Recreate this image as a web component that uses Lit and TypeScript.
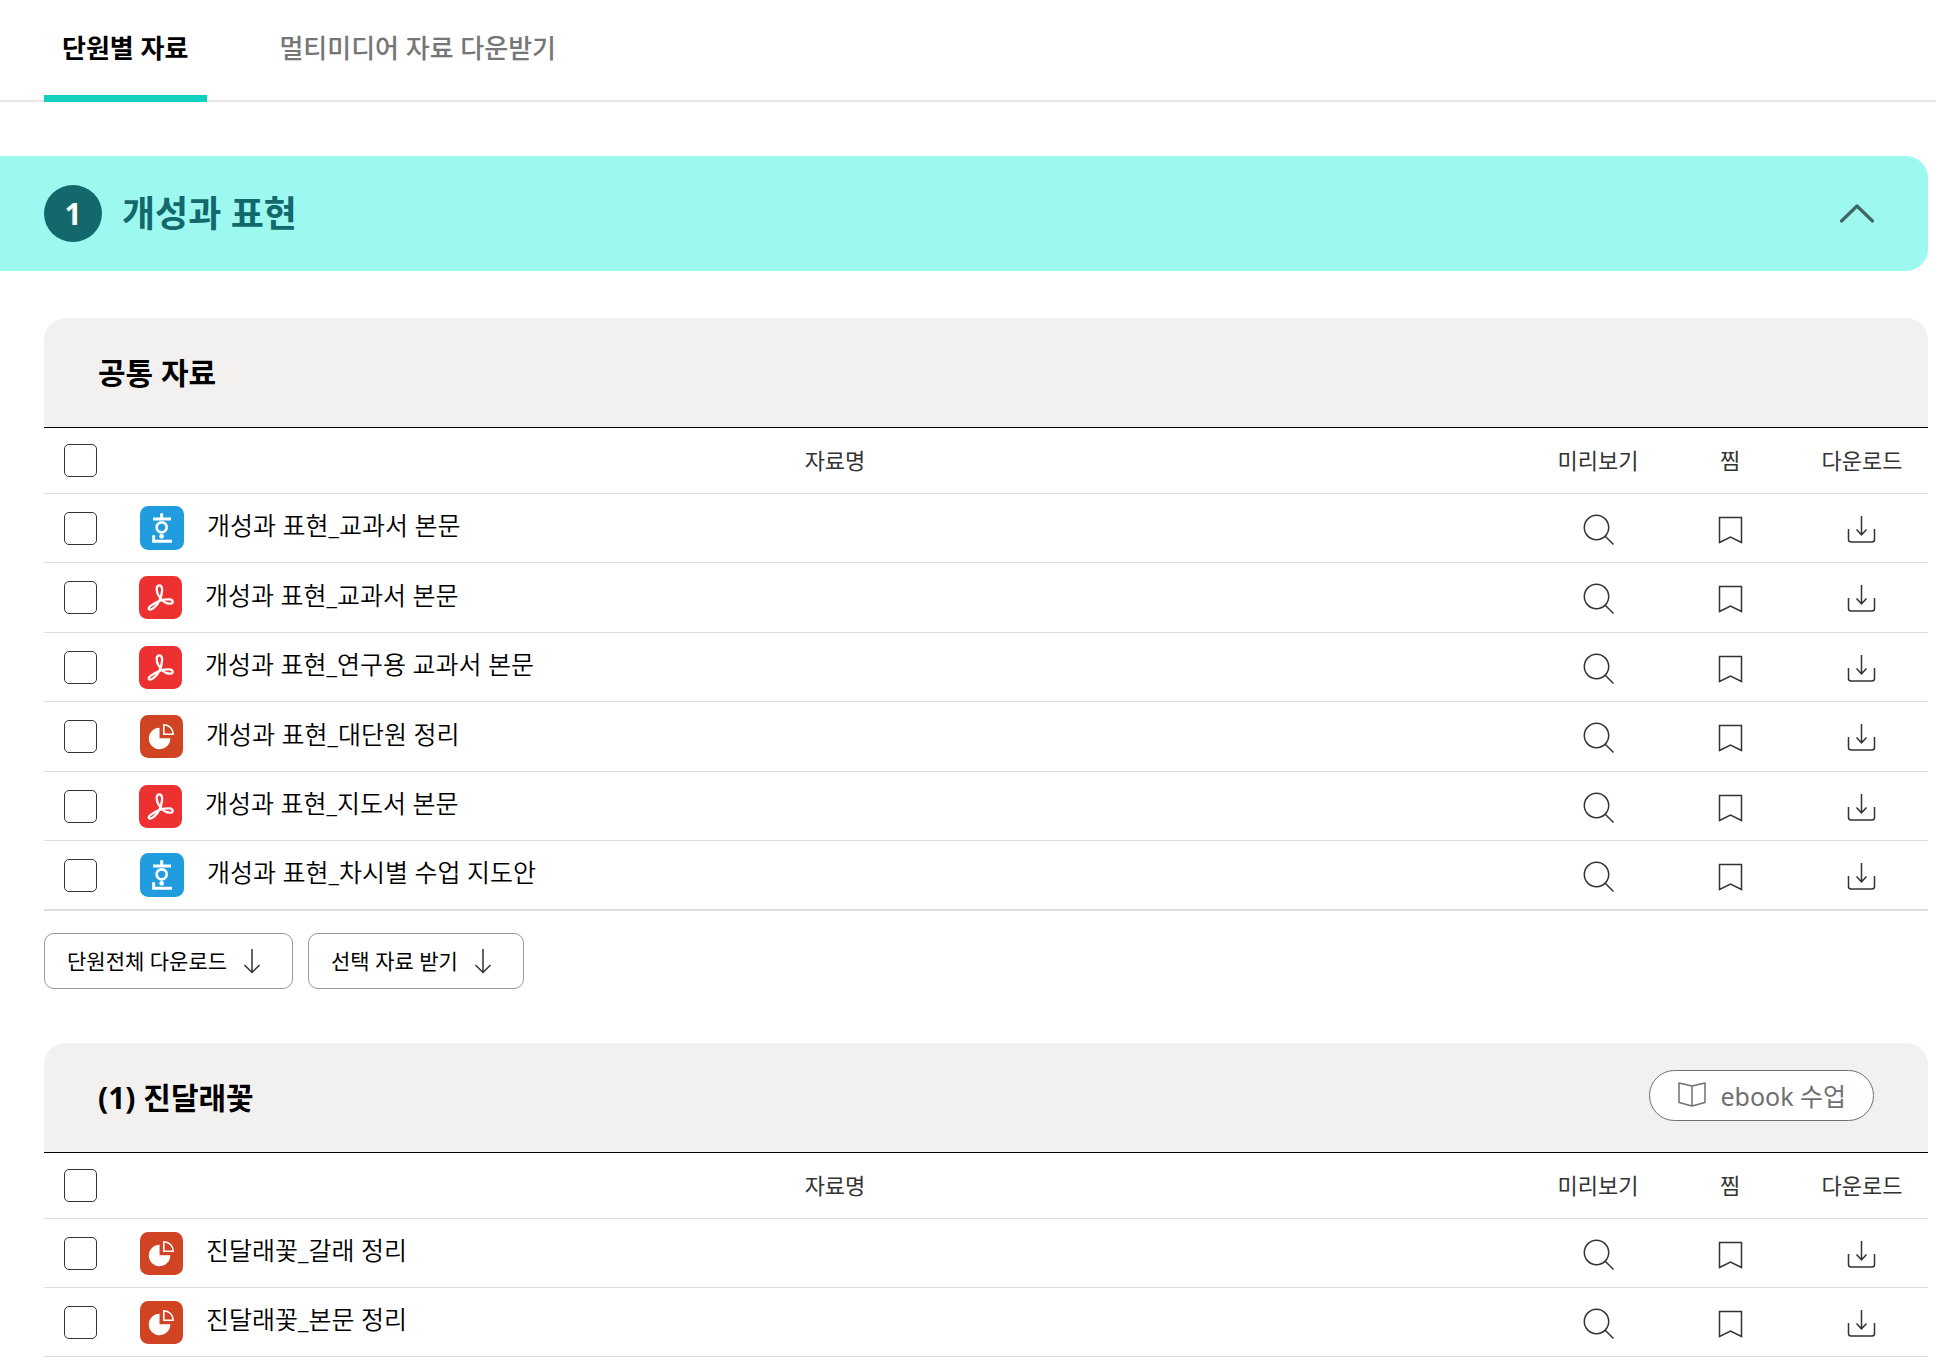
import { LitElement, html, css, svg, nothing } from "lit";
import { customElement, property } from "lit/decorators.js";

type FileKind = "hwp" | "pdf" | "ppt";

interface Material {
  kind: FileKind;
  name: string;
}

interface Section {
  id: string;
  title: string;
  ebook: boolean;
  downloads: boolean;
  items: Material[];
}

const SECTIONS: Section[] = [
  {
    id: "common",
    title: "공통 자료",
    ebook: false,
    downloads: true,
    items: [
      { kind: "hwp", name: "개성과 표현_교과서 본문" },
      { kind: "pdf", name: "개성과 표현_교과서 본문" },
      { kind: "pdf", name: "개성과 표현_연구용 교과서 본문" },
      { kind: "ppt", name: "개성과 표현_대단원 정리" },
      { kind: "pdf", name: "개성과 표현_지도서 본문" },
      { kind: "hwp", name: "개성과 표현_차시별 수업 지도안" },
    ],
  },
  {
    id: "azalea",
    title: "(1) 진달래꽃",
    ebook: true,
    downloads: false,
    items: [
      { kind: "ppt", name: "진달래꽃_갈래 정리" },
      { kind: "ppt", name: "진달래꽃_본문 정리" },
    ],
  },
];

const fileGlyphs = {
  hwp: svg`
    <rect width="132" height="132" rx="25" fill="#219cdf"/>
    <g fill="none" stroke="#fff" stroke-width="9">
      <path d="M65 22V38M39 39H93"/>
      <circle cx="65" cy="64" r="15" stroke-width="8"/>
      <path d="M41 88V106H96"/>
    </g>
    <circle cx="65" cy="91" r="7" fill="#fff"/>`,
  pdf: svg`
    <rect width="132" height="132" rx="25" fill="#ed3030"/>
    <path d="M63 29C51 29 53 47 60 60C69 76 84 86 97 85C107 84 105 73 94 72C79 71 59 77 46 85C35 91 26 99 31 102C39 107 55 91 63 75C71 58 76 29 63 29Z"
      fill="none" stroke="#fff" stroke-width="7" stroke-linejoin="round"/>`,
  ppt: svg`
    <rect width="132" height="132" rx="25" fill="#d04424"/>
    <path d="M60 39V71H93A33 33 0 1 1 60 39Z" fill="#fff"/>
    <path d="M73 30V59H102A29 29 0 0 0 73 30Z" fill="none" stroke="#fff" stroke-width="5"/>`,
};

@customElement("file-icon")
class FileIcon extends LitElement {
  @property() kind: FileKind = "hwp";

  static styles = css`
    :host { display: block; flex: none; }
    .icon { display: block; width: 44px; height: 44px; }
    .small { width: 43px; height: 43px; }
  `;

  render() {
    return html`<svg class="icon ${this.kind === "hwp" ? "" : "small"}" viewBox="0 0 132 132" aria-hidden="true">
      ${fileGlyphs[this.kind]}
    </svg>`;
  }
}

@customElement("material-section")
class MaterialSection extends LitElement {
  @property({ attribute: false }) section!: Section;

  static styles = css`
    :host { display: block; }
    * { box-sizing: border-box; }
    .head {
      display: flex;
      align-items: center;
      justify-content: space-between;
      height: 109px;
      padding: 0 54px 0 54px;
      background: #f3f1f0;
      border-radius: 22px 22px 0 0;
    }
    .title { margin: 0; font-size: 30px; line-height: 40px; font-weight: 700; color: #000; }
    button { font: inherit; background: #fff; cursor: pointer; }
    .ebook {
      display: flex;
      align-items: center;
      gap: 13px;
      height: 51px;
      padding: 0 27px;
      margin-bottom: 4px;
      border: 1px solid #707070;
      border-radius: 26px;
      font-size: 25px;
      line-height: 36px;
      color: #707070;
    }
    table {
      width: 100%;
      table-layout: fixed;
      border-collapse: separate;
      border-spacing: 0;
      border-top: 1px solid #000;
    }
    th, td { padding: 0; border-bottom: 1px solid #dedede; vertical-align: middle; }
    th { height: 66px; font-size: 22px; line-height: 32px; font-weight: 400; color: #333; text-align: center; }
    .label { padding-bottom: 2px; }
    td { height: 69px; text-align: center; }
    .closed tr:nth-child(even) td { height: 70px; }
    .closed tr:last-child td { border-bottom-width: 2px; }
    .check { width: 94px; text-align: left; }
    .act { width: 132px; }
    input {
      display: block;
      appearance: none;
      width: 33px;
      height: 33px;
      margin: 0 0 0 20px;
      border: 1px solid #333;
      border-radius: 5px;
      background: #fff;
    }
    input:checked { background: #12d0bf; }
    .file { display: flex; align-items: center; gap: 23px; padding-left: 2px; }
    .pdf { padding-left: 1px; }
    .name {
      padding-bottom: 6px;
      font-size: 25px;
      line-height: 36px;
      font-weight: 350;
      color: #000;
      text-decoration: none;
      white-space: nowrap;
    }
    .tool { display: block; width: 36px; height: 36px; margin: 3px auto 0; padding: 0; border: 0; background: none; }
    .line { display: block; fill: none; stroke: #333; stroke-width: 1.5; }
    .buttons { display: flex; gap: 15px; padding-top: 22px; }
    .pill {
      display: flex;
      align-items: center;
      gap: 13px;
      height: 56px;
      padding: 0 28px 0 22px;
      border: 1px solid #999;
      border-radius: 10px;
      font-size: 21px;
      line-height: 32px;
      color: #000;
    }
  `;

  private toolButton(label: string, shape: unknown) {
    return html`<td>
      <button class="tool" type="button" aria-label=${label}>
        <svg class="line" width="36" height="36" viewBox="0 0 36 36" aria-hidden="true">${shape}</svg>
      </button>
    </td>`;
  }

  private pill(label: string) {
    return html`<button class="pill" type="button">
      ${label}
      <svg class="line" width="24" height="28" viewBox="0 0 24 28" aria-hidden="true">
        <path d="M12 2V25M4.500 18L12 25.500L19.500 18"/>
      </svg>
    </button>`;
  }

  private row(item: Material) {
    return html`<tr>
      <td class="check"><input type="checkbox" aria-label="${item.name} 선택" /></td>
      <td>
        <div class="file ${item.kind}">
          <file-icon kind=${item.kind}></file-icon>
          <a class="name" href="#">${item.name}</a>
        </div>
      </td>
      ${this.toolButton("미리보기", svg`<circle cx="16.500" cy="15.500" r="12.200"/><path d="M25 24L33.500 32.500"/>`)}
      ${this.toolButton("찜", svg`<path d="M7.500 5.500H29.500V30.500L18.500 25L7.500 30.500Z"/>`)}
      ${this.toolButton("다운로드", svg`<path d="M17.500 4V22.500M12.500 17.500L17.500 22.800L22.500 17.500M4.500 17V27.500Q4.500 30 7 30H28Q30.500 30 30.500 27.500V17"/>`)}
    </tr>`;
  }

  render() {
    const { title, ebook, downloads, items } = this.section;
    return html`
      <div class="head">
        <h3 class="title">${title}</h3>
        ${ebook
          ? html`<button class="ebook" type="button">
              <svg width="30" height="28" viewBox="0 0 30 28" fill="none" stroke="#707070" stroke-width="1.500" stroke-linejoin="round" aria-hidden="true">
                <path d="M15 4L2 1V20.500L15 24L28 20.500V1ZM15 4V24"/>
              </svg>
              ebook 수업
            </button>`
          : nothing}
      </div>
      <table>
        <thead>
          <tr>
            <th class="check"><input type="checkbox" aria-label="${title} 전체 선택" /></th>
            <th class="label">자료명</th>
            <th class="label act">미리보기</th>
            <th class="label act">찜</th>
            <th class="label act">다운로드</th>
          </tr>
        </thead>
        <tbody class=${downloads ? "closed" : ""}>
          ${items.map((item) => this.row(item))}
        </tbody>
      </table>
      ${downloads
        ? html`<div class="buttons">${this.pill("단원전체 다운로드")}${this.pill("선택 자료 받기")}</div>`
        : nothing}
    `;
  }
}

@customElement("app-root")
class AppRoot extends LitElement {
  static styles = css`
    :host {
      display: block;
      background: #fff;
      color: #000;
      font-family: "Noto Sans", "Noto Sans CJK KR", sans-serif;
    }
    * { box-sizing: border-box; }
    .tabs {
      display: flex;
      gap: 54px;
      height: 102px;
      padding-left: 44px;
      border-bottom: 2px solid #e8e8e8;
    }
    .tab {
      display: block;
      height: 102px;
      padding: 28px 19px 0 18px;
      border-bottom: 7px solid transparent;
      font-size: 26px;
      line-height: 40px;
      font-weight: 500;
      color: #767676;
      text-decoration: none;
    }
    .active { color: #000; font-weight: 700; border-color: #12d0bf; }
    .content { padding-right: 8px; }
    .banner {
      display: flex;
      align-items: center;
      gap: 20px;
      width: 100%;
      height: 115px;
      margin-top: 54px;
      padding: 0 52px 0 44px;
      border: 0;
      border-radius: 0 22px 22px 0;
      background: #9df8ef;
      font: inherit;
      color: #12686b;
      text-align: left;
      cursor: pointer;
    }
    .number {
      display: grid;
      place-items: center;
      width: 58px;
      height: 57px;
      border-radius: 50%;
      background: #12686b;
      color: #fff;
      font-size: 30px;
      line-height: 40px;
      font-weight: 700;
    }
    .unit { flex: 1; font-size: 36px; line-height: 52px; font-weight: 700; }
    .sections { display: grid; gap: 54px; padding: 47px 0 0 44px; }
  `;

  render() {
    return html`
      <nav class="tabs">
        <a class="tab active" href="#" aria-current="page">단원별 자료</a>
        <a class="tab" href="#">멀티미디어 자료 다운받기</a>
      </nav>
      <main class="content">
        <button class="banner" type="button" aria-expanded="true">
          <span class="number">1</span>
          <span class="unit">개성과 표현</span>
          <svg width="38" height="22" viewBox="0 0 38 22" fill="none" stroke="#426664" stroke-width="3.200" stroke-linecap="round" stroke-linejoin="round" aria-hidden="true">
            <path d="M3.500 18L19 3L34.500 18"/>
          </svg>
        </button>
        <div class="sections">
          ${SECTIONS.map((s) => html`<material-section .section=${s}></material-section>`)}
        </div>
      </main>
    `;
  }
}
